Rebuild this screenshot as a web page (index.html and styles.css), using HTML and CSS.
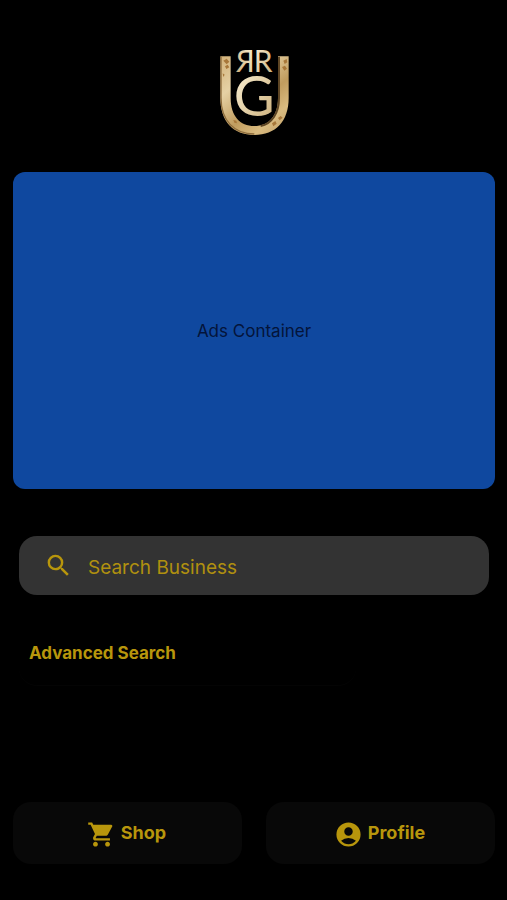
FILE: index.html
```html
<!DOCTYPE html>
<html lang="en">
<head>
<meta charset="utf-8">
<meta name="viewport" content="width=device-width, initial-scale=1">
<title>Business Search</title>
<link rel="stylesheet" href="styles.css">
</head>
<body>
<main class="screen">
  <svg class="logo" viewBox="45 36 213 264" role="img" aria-label="RR GU">
    <defs>
      <linearGradient id="gold" gradientUnits="userSpaceOnUse" x1="50" y1="60" x2="250" y2="290">
        <stop offset="0" stop-color="#d2b27a"/>
        <stop offset=".3" stop-color="#e6d1a4"/>
        <stop offset=".6" stop-color="#c09c5e"/>
        <stop offset=".8" stop-color="#d9bb80"/>
        <stop offset="1" stop-color="#c3a068"/>
      </linearGradient>
      <linearGradient id="pale" x1="0" y1="0" x2="1" y2="1">
        <stop offset="0" stop-color="#fff6dc"/>
        <stop offset="1" stop-color="#c9ac76"/>
      </linearGradient>
    </defs>
    <path class="shoe" d="M49 61H80V186C80 240 108 270 151 270S222 240 222 186V61H254V186C254 256 215 297 151 297S49 256 49 186Z"/>
    <path class="shoe-edge" d="M225 62V186C225 232 203 264 170 270"/>
    <path class="shoe-shade" d="M51 62V186C51 253 90 294 151 294"/>
    <path class="specks" d="M58 74l10-6 8 9-8 8zM63 91l8-5 5 8-9 5zM56 112l6 4-4 7zM238 74l10-5 2 10-8 5zM234 93l9-4 6 9-8 6zM88 252l9 2 2 8-8-2zM204 262l10-7 4 8-10 8zM222 246l8-6 6 5-9 8z"/>
    <text class="letter-r" x="149" y="109">R</text>
    <text class="letter-r" x="-152" y="109" transform="scale(-1 1)">R</text>
    <text class="letter-g" x="151" y="240">G</text>
  </svg>

  <section class="ads">Ads Container</section>

  <form class="search" role="search">
    <label class="search-label" for="business" aria-label="Search Business">
      <svg class="icon" viewBox="0 0 24 24" aria-hidden="true"><path d="M15.500 14h-.79l-.28-.27A6.471 6.471 0 0 0 16 9.500 6.500 6.500 0 1 0 9.500 16c1.610 0 3.090-.59 4.230-1.570l.27.28v.79l5 4.990L20.490 19zm-6 0a4.500 4.500 0 1 1 0-9 4.500 4.500 0 0 1 0 9z"/></svg>
    </label>
    <input class="search-input" id="business" type="text" placeholder="Search Business">
  </form>

  <a class="advanced" href="#advanced">Advanced Search</a>

  <nav class="actions">
    <button class="action" type="button">
      <svg class="icon" viewBox="0 0 24 24" aria-hidden="true"><path d="M7 18c-1.100 0-1.990.9-1.990 2S5.900 22 7 22s2-.9 2-2-.9-2-2-2zM1 2v2h2l3.600 7.590-1.350 2.450c-.16.28-.25.61-.25.96 0 1.100.9 2 2 2h12v-2H7.420c-.14 0-.25-.11-.25-.25l.03-.12.9-1.630h7.450c.75 0 1.410-.41 1.750-1.030l3.580-6.490A1 1 0 0 0 20 4H5.210l-.94-2zm16 16c-1.100 0-1.990.9-1.990 2s.89 2 1.990 2 2-.9 2-2-.9-2-2-2z"/></svg>
      <span>Shop</span>
    </button>
    <button class="action" type="button">
      <svg class="icon" viewBox="0 0 24 24" aria-hidden="true"><path fill-rule="evenodd" d="M12 2a10 10 0 1 0 0 20 10 10 0 0 0 0-20zm0 4a3.500 3.500 0 1 1 0 7 3.500 3.500 0 0 1 0-7zm0 14c-2.030 0-4.430-.82-6.140-2.880a9.950 9.950 0 0 1 12.280 0C16.430 19.180 14.030 20 12 20z"/></svg>
      <span>Profile</span>
    </button>
  </nav>
</main>
</body>
</html>
```

FILE: styles.css
```css
:root {
  --gold: #b8960c;
}

* {
  box-sizing: border-box;
}

body {
  margin: 0;
  background: #000;
  color: var(--gold);
  font-family: Inter, "Liberation Sans", sans-serif;
}

.screen {
  display: flex;
  flex-direction: column;
  min-height: 100vh;
  padding: 48px 12px 36px 13px;
}

.logo {
  width: 71px;
  height: 88px;
  align-self: center;
  overflow: visible;
}

.shoe {
  fill: url(#gold);
}

.shoe-edge {
  fill: none;
  stroke: #5d4524;
  stroke-width: 6;
}

.shoe-shade {
  fill: none;
  stroke: #8d6c3c;
  stroke-width: 4;
}

.specks {
  fill: #a8783a;
}

.letter-r,
.letter-g {
  font-family: Lato, Inter, sans-serif;
  fill: url(#pale);
}

.letter-r {
  font-size: 90px;
}

.letter-g {
  font-size: 168px;
  text-anchor: middle;
}

.ads {
  display: grid;
  place-items: center;
  height: 317px;
  margin-top: 36px;
  border-radius: 12px;
  background: #0f489f;
  color: #04143a;
  font-size: 17px;
}

.search {
  display: flex;
  align-items: center;
  gap: 15px;
  height: 59px;
  margin: 47px 6px 0;
  padding: 0 25px;
  border-radius: 18px;
  background: #333;
}

.search-label {
  display: flex;
}

.icon {
  flex: none;
  width: 29px;
  height: 29px;
  fill: currentColor;
}

.search-input {
  flex: 1;
  min-width: 0;
  padding: 3px 0 0;
  border: 0;
  outline: 0;
  background: none;
  color: var(--gold);
  font: inherit;
  font-size: 19px;
}

.search-input::placeholder {
  color: #b0900f;
  opacity: 1;
}

.advanced {
  align-self: flex-start;
  width: 70%;
  margin: 26px 6px 0;
  padding: 20px 10px;
  border-bottom: 1px solid #040404;
  border-radius: 18px;
  color: var(--gold);
  font-size: 17px;
  font-weight: 700;
  line-height: 24px;
  text-decoration: none;
}

.actions {
  display: grid;
  grid-template-columns: 1fr 1fr;
  gap: 24px;
  margin-top: auto;
}

.action {
  display: flex;
  align-items: center;
  justify-content: center;
  gap: 5px;
  height: 62px;
  padding: 0 2px 1px 0;
  border: 0;
  border-radius: 18px;
  background: #080808;
  color: var(--gold);
  font: inherit;
  font-size: 18px;
  font-weight: 700;
}

.action .icon {
  margin-top: 4px;
}
```
